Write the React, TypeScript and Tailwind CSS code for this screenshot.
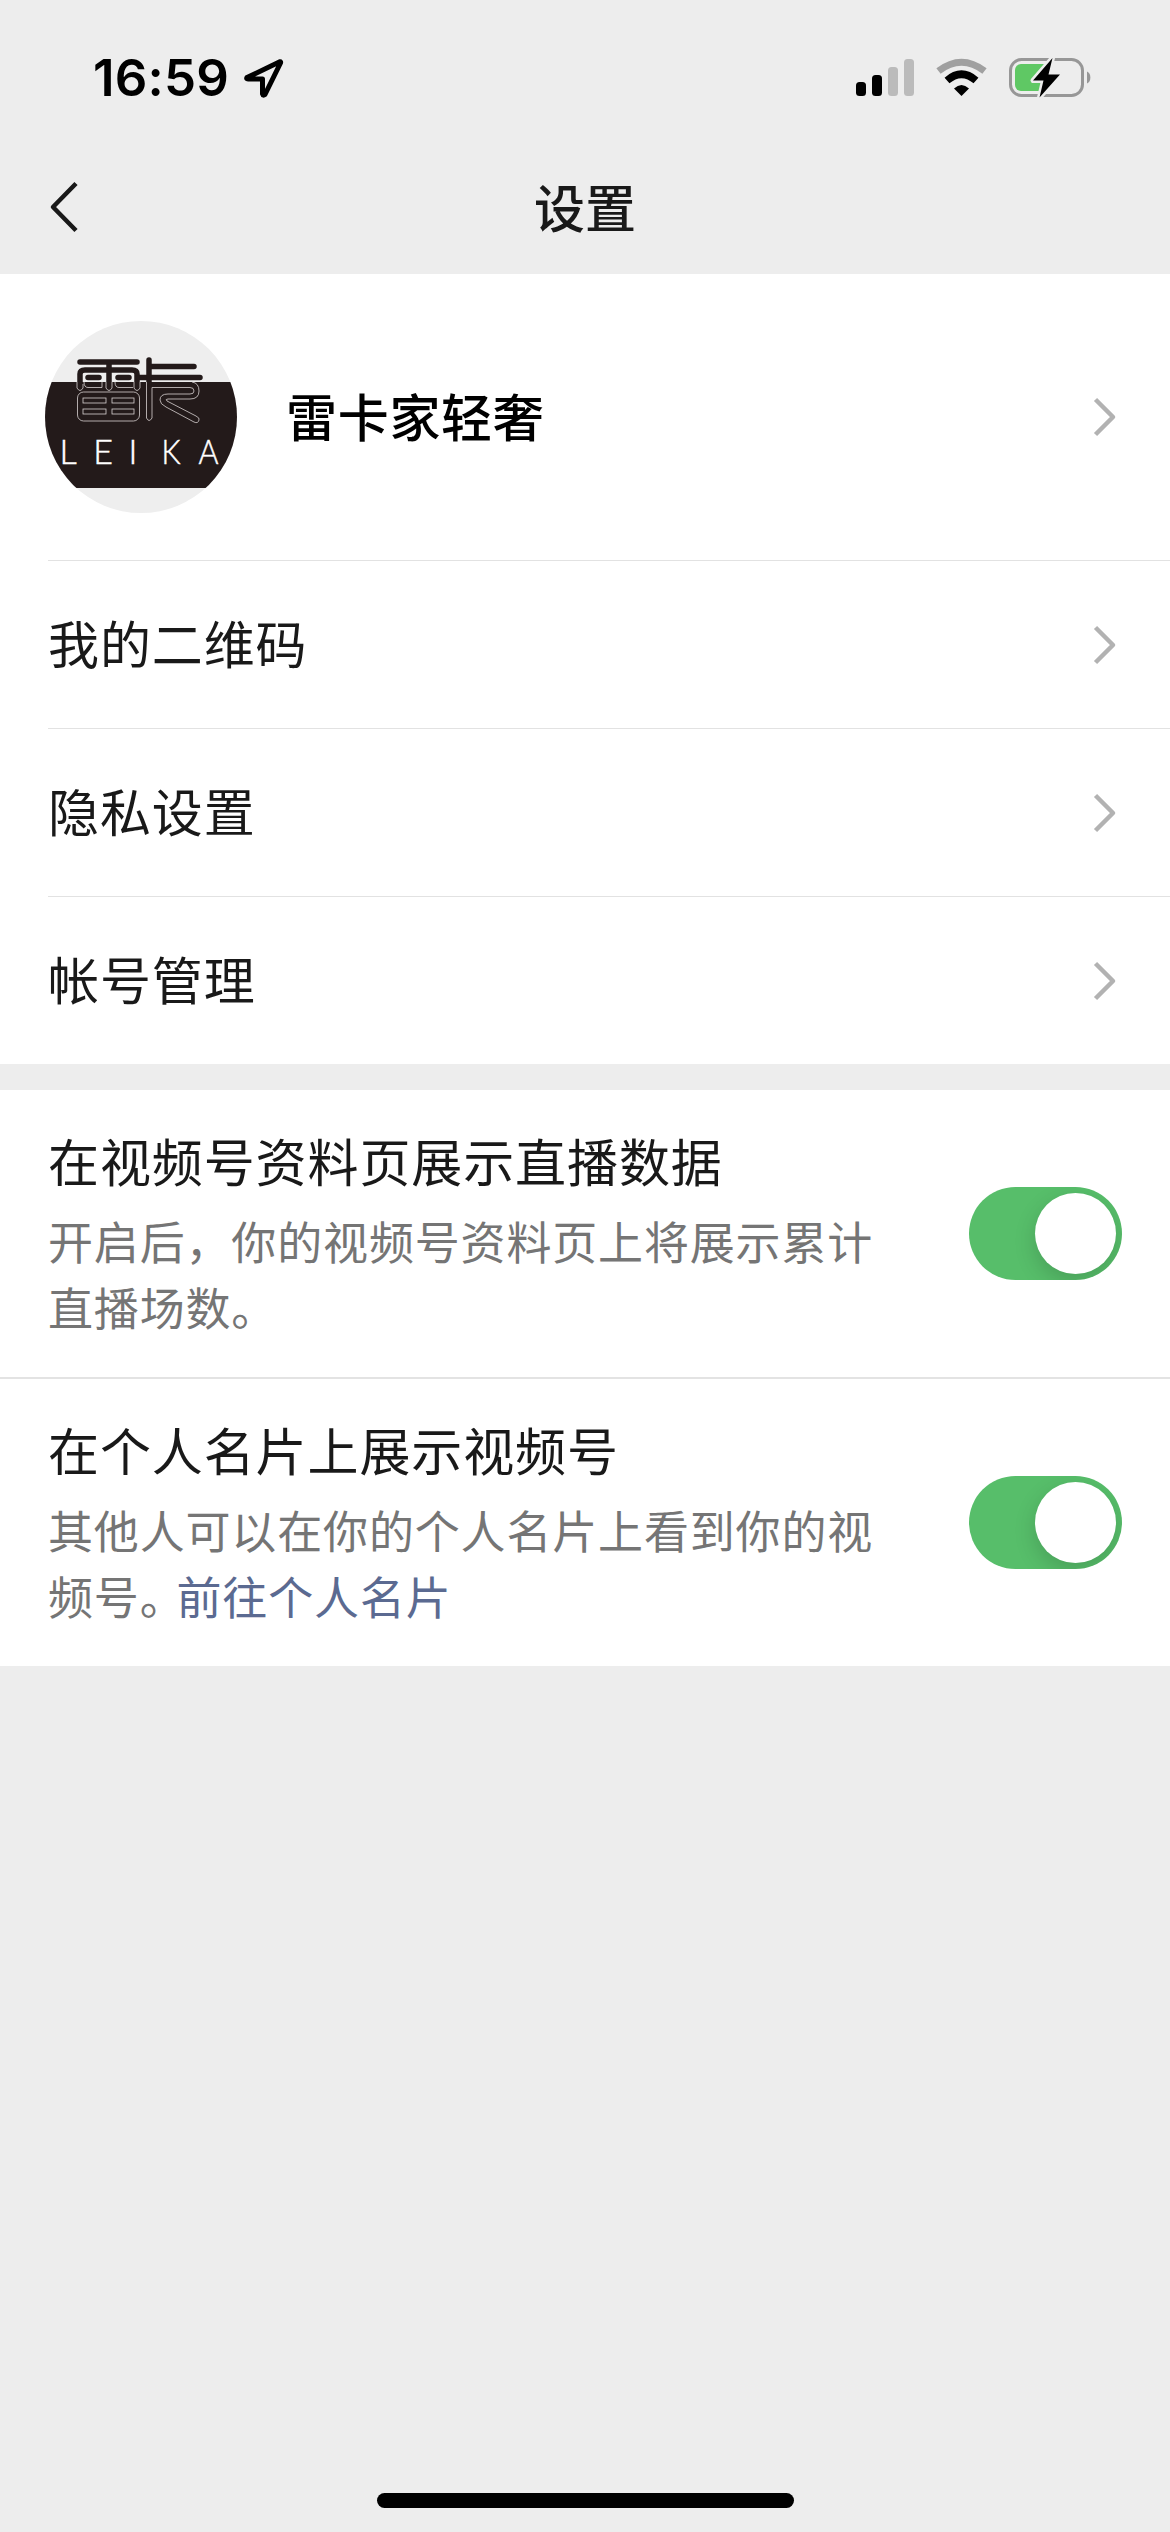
import React from 'react';

const links = ['我的二维码', '隐私设置', '帐号管理'];

const StatusBar: React.FC = () => (
  <div className="flex h-[152px] items-start justify-between pl-[93px] pr-[78px]">
    <div className="flex items-center gap-[14px] pt-[46px]">
      <span className="font-[Inter] text-[51px] font-semibold leading-[64px] tracking-[0.200px] text-black">
        16:59
      </span>
      <svg className="mt-[1px] h-[41px] w-[41px]" viewBox="0 0 41 41" fill="none">
        <path
          d="M36.800 3.800L4 19.500Q3 21 5 21H19.500V36Q20 38 22 36.500L37.500 5Q38 3.500 36.800 3.800Z"
          stroke="#000"
          strokeWidth="5"
          strokeLinejoin="round"
        />
      </svg>
    </div>
    <svg className="mt-[54px] h-[48px] w-[240px]" viewBox="0 0 240 48">
      {/* signal */}
      <rect x="4" y="28" width="10" height="14" rx="3.5" />
      <rect x="20" y="21" width="10" height="21" rx="3.5" />
      <rect x="36" y="13" width="10" height="29" rx="3.5" fill="#bbb" />
      <rect x="52" y="5" width="10" height="37" rx="3.5" fill="#bbb" />
      {/* wifi */}
      <path d="M86.500 17Q109.500 -0.500 132.500 17" fill="none" stroke="#a0a0a0" strokeWidth="7" />
      <path d="M95 26.500Q109.500 14 124 26.500" fill="none" stroke="#000" strokeWidth="7.500" />
      <path d="M102 34.500Q109.500 27.500 117 34.500L109.500 42Z" />
      {/* battery */}
      <rect x="158.500" y="5.500" width="72" height="36" rx="11" fill="none" stroke="#979797" strokeWidth="3" />
      <rect x="163" y="10" width="36" height="27" rx="6" fill="#5fc864" />
      <path d="M235 17.500C239.500 19 239.500 28 235 29.500Z" fill="#979797" />
      <path
        d="M200.500 4L181 26.500H191.500L187.500 43.500L208 20.500H196.500Z"
        stroke="#ededed"
        strokeWidth="5"
        strokeLinejoin="round"
        paintOrder="stroke"
      />
    </svg>
  </div>
);

const NavBar: React.FC = () => (
  <div className="grid h-[122px] grid-cols-[1fr_auto_1fr] items-center">
    <svg className="mb-[12px] ml-[47px] h-[54px] w-[34px]" viewBox="0 0 34 54" fill="none">
      <path d="M29 3.500L6 27L29 50.500" stroke="#191919" strokeWidth="4.500" strokeLinejoin="round" />
    </svg>
    <h1 className="mb-[15px] text-[51px] font-medium leading-[72px]">设置</h1>
  </div>
);

const Chevron: React.FC = () => (
  <svg className="h-[40px] w-[24px] shrink-0" viewBox="0 0 24 40" fill="none">
    <path d="M2.500 2.500L20 20L2.500 37.500" stroke="#b2b2b2" strokeWidth="4.500" strokeLinejoin="round" />
  </svg>
);

const Avatar: React.FC = () => (
  <svg className="h-[192px] w-[192px] shrink-0 rounded-full" viewBox="0 0 192 192">
    <rect width="192" height="192" fill="#eeeeee" />
    <rect y="61" width="192" height="106" fill="#231a1a" />
    {/* mark, upper half solid */}
    <g stroke="#231a1a" strokeWidth="5.500" strokeLinecap="round" strokeLinejoin="round" fill="none">
      <path d="M35 41H92M35 67V53Q35 49 40 49H87Q92 49 92 53V67M64 41V67" />
      <path d="M43 56.500H54M43 64H54M73 56.500H84M73 64H84M94 56.500H155" />
      <path d="M104 39V70M104 45.500H149" />
    </g>
    {/* mark, lower half outlined */}
    <g stroke="#d8d2d2" strokeWidth="0.800" fill="none">
      <path d="M32 61V67Q35 72 38 67V63M61 61V67Q64 72 67 67V61M89 61V67Q92 72 95 67V61" />
      <path d="M39 61Q39 66.500 43 66.500H57V61M70 61Q70 66.500 74 66.500H88" />
      <rect x="32.500" y="71" width="62" height="29" rx="6" />
      <rect x="38" y="77" width="23" height="5" />
      <rect x="67" y="77" width="22" height="5" />
      <rect x="38" y="88" width="23" height="5" />
      <rect x="67" y="88" width="22" height="5" />
      <path d="M101.500 61V97Q104 102 107 97V66.500H145Q149 66.500 149 70Q149 73 145 73H123Q115 73 115 79Q115 83 121 86L149 101Q153 103 154 99Q155 97 151 95L122 80Q120 78 123 78H145Q154 78 154 70Q154 62 147 61" />
    </g>
    <g
      className="font-[Lato] text-[34px] font-light"
      fill="#fff"
      stroke="#fff"
      strokeWidth="0.500"
      textAnchor="middle"
    >
      <text x="23" y="142.500">L</text>
      <text x="58" y="142.500">E</text>
      <text x="88" y="142.500">I</text>
      <text x="126" y="142.500" textLength="19" lengthAdjust="spacingAndGlyphs">K</text>
      <text x="163.500" y="142.500" textLength="20" lengthAdjust="spacingAndGlyphs">A</text>
    </g>
  </svg>
);

const Switch: React.FC = () => (
  <div className="flex h-[93px] w-[153px] shrink-0 justify-end overflow-hidden rounded-full bg-[#57be6a] p-[6px]">
    <div className="size-[81px] rounded-full bg-white shadow-[0_8px_22px_rgba(0,0,0,0.16)]" />
  </div>
);

interface ToggleRowProps {
  title: string;
  children: React.ReactNode;
}

const ToggleRow: React.FC<ToggleRowProps> = ({ title, children }) => (
  <div className="flex h-[287px] items-center justify-between pl-[48px] pr-[48px]">
    <div className="mb-[4px] w-[850px]">
      <h2 className="text-[51px] leading-[72px] tracking-[0.900px]">{title}</h2>
      <p className="mt-[12px] text-[45px] leading-[66px] tracking-[0.840px] text-[#757575]">{children}</p>
    </div>
    <Switch />
  </div>
);

export default function App() {
  return (
    <div
      lang="zh-CN"
      className="flex h-[2532px] w-[1170px] flex-col overflow-hidden bg-[#ededed] font-['Noto_Sans_CJK_SC',sans-serif] text-[#191919]"
    >
      <StatusBar />
      <NavBar />

      <section className="h-[790px] bg-white">
        <div className="flex h-[286px] items-center pl-[45px] pr-[53px]">
          <Avatar />
          <span className="mb-[5px] ml-[49px] flex-1 text-[51px] font-medium leading-[72px] tracking-[0.700px] text-black">
            雷卡家轻奢
          </span>
          <Chevron />
        </div>
        {links.map((label) => (
          <div
            key={label}
            className="ml-[48px] flex h-[168px] items-center justify-between border-t border-[#e2e2e2] pr-[53px]"
          >
            <span className="mb-[5px] text-[51px] leading-[72px] tracking-[0.900px]">{label}</span>
            <Chevron />
          </div>
        ))}
      </section>

      <section className="mt-[26px] bg-white">
        <ToggleRow title="在视频号资料页展示直播数据">
          开启后，你的视频号资料页上将展示累计
          <br />
          直播场数。
        </ToggleRow>
        <div className="h-[2px] bg-[#e3e3e3]" />
        <ToggleRow title="在个人名片上展示视频号">
          其他人可以在你的个人名片上看到你的视
          <br />
          频号。
          <a className="-ml-[9px] text-[#5b6a91]">前往个人名片</a>
        </ToggleRow>
      </section>

      <div className="mx-auto mb-[24px] mt-auto h-[15px] w-[417px] rounded-full bg-black" />
    </div>
  );
}
